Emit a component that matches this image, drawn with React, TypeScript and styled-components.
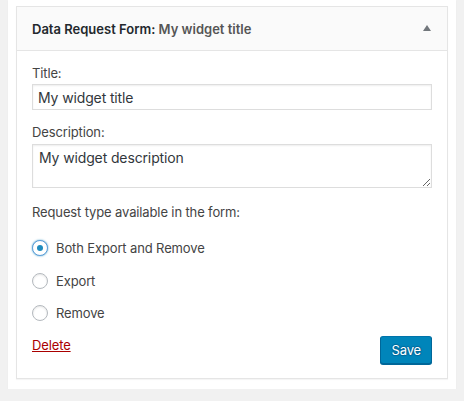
import React from "react";
import styled, { createGlobalStyle } from "styled-components";

const GlobalStyle = createGlobalStyle`
  html, body {
    margin: 0;
    padding: 0;
    background: #f1f1f1;
  }
  body {
    font-family: Inter, "Liberation Sans", Arial, sans-serif;
    font-size: 13px;
    letter-spacing: -0.13px;
    color: #444;
  }
  * { box-sizing: border-box; }
`;

const Page = styled.div`
  padding: 0 8px;
  width: 464px;
`;

const Sidebar = styled.div`
  background: #fff;
  padding: 6px 8px 10px;
  box-shadow: 0 1px 1px rgba(0, 0, 0, 0.06);
`;

const Widget = styled.div`
  border: 1px solid #e5e5e5;
  background: #fff;
  box-shadow: 0 1px 1px rgba(0, 0, 0, 0.04);
`;

const WidgetTop = styled.div`
  height: 44px;
  background: #fafafa;
  border-bottom: 1px solid #e5e5e5;
  display: flex;
  align-items: center;
  justify-content: space-between;
  padding: 0 16px 0 15px;
`;

const WidgetTitle = styled.h3`
  margin: 0;
  font-size: 13px;
  font-weight: 600;
  letter-spacing: 0;
  color: #23282d;
  line-height: 18px;
`;

const InTitle = styled.span`
  color: #555;
`;

const Toggle = styled.svg`
  width: 8px;
  height: 6px;
  display: block;
  margin-top: -1px;
`;

const Inside = styled.div`
  padding: 0 15px 14px;
`;

const FieldLabel = styled.label<{ $top?: number }>`
  display: block;
  margin-top: ${(p) => p.$top ?? 13}px;
  line-height: 18px;
  color: #444;
`;

const TextInput = styled.input`
  display: block;
  width: 100%;
  height: 26px;
  margin-top: 2px;
  padding: 0 5px;
  border: 1px solid #ddd;
  border-radius: 0;
  box-shadow: inset 0 1px 2px rgba(0, 0, 0, 0.07);
  font-family: inherit;
  font-size: 14px;
  letter-spacing: inherit;
  color: #32373c;
  background: #fff;
  outline: none;
`;

const TextArea = styled.textarea`
  display: block;
  width: 100%;
  height: 44px;
  margin-top: 3px;
  padding: 4px 6px;
  border: 1px solid #ddd;
  border-radius: 0;
  box-shadow: inset 0 1px 2px rgba(0, 0, 0, 0.07);
  font-family: inherit;
  font-size: 14px;
  letter-spacing: inherit;
  line-height: 18px;
  color: #32373c;
  background: #fff;
  outline: none;
  resize: vertical;
`;

const Prompt = styled.p`
  margin: 15px 0 0;
  line-height: 18px;
`;

const RadioList = styled.div`
  display: flex;
  flex-direction: column;
  gap: 16px;
  margin-top: 19px;
`;

const RadioRow = styled.label`
  display: flex;
  align-items: center;
  gap: 8px;
  height: 16.5px;
  line-height: 18px;
  color: #444;
`;

const Radio = styled.input<{ $focused?: boolean }>`
  appearance: none;
  -webkit-appearance: none;
  margin: 0;
  width: 16px;
  height: 16px;
  border-radius: 50%;
  border: 1px solid ${(p) => (p.$focused ? "#5b9dd9" : "#b4b9be")};
  background: #fff;
  box-shadow: ${(p) =>
    p.$focused
      ? "0 0 2px rgba(30, 140, 190, 0.8)"
      : "inset 0 1px 2px rgba(0, 0, 0, 0.1)"};
  display: grid;
  place-items: center;
  flex: none;
  outline: none;

  &:checked::before {
    content: "";
    width: 6px;
    height: 6px;
    border-radius: 50%;
    background: #1e8cbe;
  }
`;

const Actions = styled.div`
  display: flex;
  justify-content: space-between;
  align-items: flex-start;
  margin-top: 14px;
`;

const DeleteLink = styled.a`
  color: #a00;
  text-decoration: underline;
  line-height: 18px;
  cursor: pointer;
`;

const PrimaryButton = styled.button`
  height: 28px;
  padding: 0 10px 1px;
  font-family: inherit;
  font-size: 13px;
  letter-spacing: inherit;
  line-height: 26px;
  color: #fff;
  background: #0085ba;
  border: 1px solid;
  border-color: #0073aa #006799 #006799;
  border-radius: 3px;
  box-shadow: 0 1px 0 #006799;
  text-shadow: 0 -1px 1px #006799, 1px 0 1px #006799, 0 1px 1px #006799,
    -1px 0 1px #006799;
  cursor: pointer;
`;

export default function App() {
  return (
    <>
      <GlobalStyle />
      <Page>
        <Sidebar>
          <Widget>
            <WidgetTop>
              <WidgetTitle>
                Data Request Form: <InTitle>My widget title</InTitle>
              </WidgetTitle>
              <Toggle viewBox="0 0 8 6">
                <path d="M4 0 L8 6 L0 6 Z" fill="#72777c" />
              </Toggle>
            </WidgetTop>
            <Inside>
              <FieldLabel htmlFor="w-title">Title:</FieldLabel>
              <TextInput id="w-title" type="text" defaultValue="My widget title" />
              <FieldLabel htmlFor="w-desc">Description:</FieldLabel>
              <TextArea id="w-desc" defaultValue="My widget description" />
              <Prompt>Request type available in the form:</Prompt>
              <RadioList>
                <RadioRow>
                  <Radio type="radio" name="rt" defaultChecked $focused />
                  Both Export and Remove
                </RadioRow>
                <RadioRow>
                  <Radio type="radio" name="rt" />
                  Export
                </RadioRow>
                <RadioRow>
                  <Radio type="radio" name="rt" />
                  Remove
                </RadioRow>
              </RadioList>
              <Actions>
                <DeleteLink>Delete</DeleteLink>
                <PrimaryButton type="button">Save</PrimaryButton>
              </Actions>
            </Inside>
          </Widget>
        </Sidebar>
      </Page>
    </>
  );
}
